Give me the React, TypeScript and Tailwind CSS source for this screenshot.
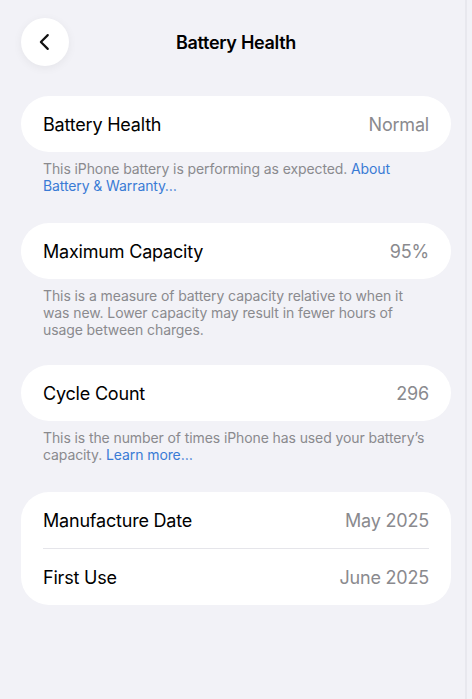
import { ReactNode } from 'react';

const font = { fontFamily: 'Inter, "Noto Sans", sans-serif' };

const Row = ({ label, value }: { label: string; value: string }) => (
  <div className="h-14 flex items-center justify-between">
    <span className="text-[18px] text-black tracking-[-0.2px]">{label}</span>
    <span className="text-[18px] text-[#8a8a8e] tracking-[-0.2px]">{value}</span>
  </div>
);

const Footer = ({ children }: { children: ReactNode }) => (
  <p className="mt-[8px] px-[22px] text-[14px] leading-[17px] text-[#8a8a8e] tracking-[-0.1px]">{children}</p>
);

const Link = ({ children }: { children: ReactNode }) => (
  <span className="text-[#3a7bd5]">{children}</span>
);

export default function App() {
  return (
    <div className="w-[472px] h-[699px] bg-[#f2f2f7] shadow-[inset_-5px_0_0_#f2f2f7,inset_-7px_0_0_#e8e8ee] overflow-hidden" style={font}>
      {/* Nav bar */}
      <div className="relative h-[84px] flex items-center justify-center">
        <button className="absolute left-[21px] top-[18px] w-12 h-12 rounded-full bg-white shadow-[0_2px_10px_rgba(0,0,0,0.06)] flex items-center justify-center">
          <svg width="22" height="22" viewBox="0 0 24 24" fill="none" stroke="#111" strokeWidth="2.4" strokeLinecap="round" strokeLinejoin="round">
            <path d="M15 4.5 7.5 12l7.5 7.5" />
          </svg>
        </button>
        <h1 className="text-[18px] font-semibold text-black tracking-[-0.3px]">Battery Health</h1>
      </div>

      <div className="px-[21px] pt-[12px]">
        <div className="bg-white rounded-[28px] px-[22px]">
          <Row label="Battery Health" value="Normal" />
        </div>
        <Footer>
          This iPhone battery is performing as expected. <Link>About Battery &amp; Warranty…</Link>
        </Footer>

        <div className="mt-[29px] bg-white rounded-[28px] px-[22px]">
          <Row label="Maximum Capacity" value="95%" />
        </div>
        <Footer>
          This is a measure of battery capacity relative to when it was new. Lower capacity may result in fewer hours of usage between charges.
        </Footer>

        <div className="mt-[27px] bg-white rounded-[28px] px-[22px]">
          <Row label="Cycle Count" value="296" />
        </div>
        <Footer>
          This is the number of times iPhone has used your battery’s capacity. <Link>Learn more…</Link>
        </Footer>

        <div className="mt-[29px] bg-white rounded-[28px] px-[22px]">
          <Row label="Manufacture Date" value="May 2025" />
          <div className="h-px bg-[#e5e5ea]" />
          <Row label="First Use" value="June 2025" />
        </div>
      </div>
    </div>
  );
}
